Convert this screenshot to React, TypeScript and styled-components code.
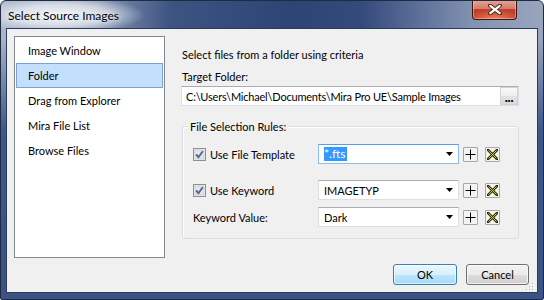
import React from "react";
import styled, { createGlobalStyle } from "styled-components";

const FONT = `"Lato", "Open Sans", "Liberation Sans", sans-serif`;

const Global = createGlobalStyle`
  html, body { margin: 0; padding: 0; background: #ffffff; }
  body { font-family: ${FONT}; font-size: 11px; color: #000; }
  * { box-sizing: border-box; }
`;

const Window = styled.div`
  width: 544px;
  height: 300px;
  border: 1px solid #1e2b42;
  border-radius: 6px 6px 2px 2px;
  overflow: hidden;
  display: flex;
  flex-direction: column;
  background:
    radial-gradient(ellipse 84px 19px at 60px 14px, rgba(255, 255, 255, 0.88) 0%, rgba(255, 255, 255, 0.62) 55%, rgba(255, 255, 255, 0) 100%),
    linear-gradient(180deg, rgba(62, 86, 136, 0) 0px, rgba(62, 86, 136, 0) 36px, rgba(62, 86, 136, 1) 130px, rgba(58, 82, 132, 1) 100%),
    linear-gradient(90deg, #aab6c9 0px, #8596b3 95px, #3d5382 170px, #2e4474 290px, #344a7b 360px, #5d719a 420px, #8291b0 470px, #9aa6bd 544px);
`;

const TitleBar = styled.div`
  height: 27px;
  display: flex;
  align-items: flex-start;
  justify-content: space-between;
  flex-shrink: 0;
`;

const Title = styled.div`
  padding: 7px 0 0 7px;
  line-height: 15px;
  font-size: 12px;
  color: #000;
  text-shadow: 0 0 5px rgba(255, 255, 255, 0.9);
`;

const CloseButton = styled.div`
  width: 45px;
  height: 20px;
  margin-top: -1px;
  margin-right: 26px;
  border: 1px solid #3b1710;
  border-top: none;
  border-radius: 0 0 4px 4px;
  background:
    radial-gradient(ellipse 70% 50% at 50% 100%, rgba(255, 150, 110, 0.8) 0%, rgba(255, 150, 110, 0) 100%),
    linear-gradient(180deg, #e9a595 0%, #d47b6a 45%, #c2402c 50%, #b3321f 100%);
  box-shadow: inset 0 0 0 1px rgba(255, 220, 210, 0.45);
  display: flex;
  align-items: center;
  justify-content: center;
`;

const Client = styled.div`
  flex: 1;
  margin: 0 5px 6px 5px;
  border: 1px solid #2a3b5c;
  background: #f0f0f0;
  padding: 7px 8px 7px 7px;
  display: flex;
  flex-direction: column;
  position: relative;
`;

const MainRow = styled.div`
  display: flex;
  height: 222px;
`;

const ListBox = styled.div`
  width: 151px;
  height: 222px;
  background: #ffffff;
  border: 1px solid #828790;
  padding: 1px;
  display: flex;
  flex-direction: column;
`;

const ListItem = styled.div<{ $selected?: boolean }>`
  height: 25px;
  display: flex;
  align-items: center;
  padding-left: 11px;
  border: 1px solid ${(p) => (p.$selected ? "#7da2ce" : "transparent")};
  background: ${(p) => (p.$selected ? "#c4dffb" : "transparent")};
  white-space: nowrap;
`;

const RightColumn = styled.div`
  margin-left: 16px;
  width: 338px;
  display: flex;
  flex-direction: column;
`;

const Text = styled.div<{ $mt?: number }>`
  margin-top: ${(p) => p.$mt ?? 0}px;
  padding-left: 1px;
  line-height: 15px;
  white-space: nowrap;
`;

const TextBox = styled.div`
  margin-top: 2px;
  height: 20px;
  width: 338px;
  background: #fff;
  border: 1px solid #dbdfe6;
  border-top-color: #abadb3;
  display: flex;
  align-items: center;
  padding-left: 4px;
`;

const TextValue = styled.div`
  flex: 1;
  white-space: nowrap;
  overflow: hidden;
  letter-spacing: -0.2px;
`;

const BrowseButton = styled.div`
  width: 18px;
  height: 18px;
  background: linear-gradient(180deg, #f8f8f8 0%, #eeeeee 50%, #e2e2e2 51%, #dadada 100%);
  border: 1px solid #d2d2d2;
  font-weight: 900;
  font-size: 13px;
  line-height: 19px;
  text-align: center;
  letter-spacing: -0.3px;
  overflow: hidden;
`;

const GroupBox = styled.div`
  position: relative;
  margin-top: 20px;
  margin-left: 1px;
  width: 337px;
  height: 113px;
  border: 1px solid #d5dfe5;
  border-radius: 3px;
  box-shadow: inset 1px 1px 0 #ffffff;
  padding: 17px 0 0 10px;
  display: flex;
  flex-direction: column;
`;

const Legend = styled.div`
  position: absolute;
  top: -8px;
  left: 5px;
  padding: 0 2px;
  background: #f0f0f0;
  line-height: 15px;
`;

const RuleRow = styled.div<{ $mt?: number }>`
  margin-top: ${(p) => p.$mt ?? 0}px;
  height: 20px;
  display: grid;
  grid-template-columns: 125px 141px auto;
  align-items: center;
`;

const RowLabel = styled.div`
  display: flex;
  align-items: center;
  gap: 4px;
  white-space: nowrap;
`;

const Combo = styled.div<{ $focused?: boolean }>`
  height: 20px;
  background: #fff;
  border: 1px solid ${(p) => (p.$focused ? "#8dbce9" : "#dcdfe5")};
  border-top-color: ${(p) => (p.$focused ? "#569de5" : "#abadb3")};
  display: flex;
  align-items: center;
  padding: 0 5px 0 5px;
`;

const ComboText = styled.div`
  flex: 1;
  white-space: nowrap;
`;

const Selected = styled.span`
  background: #3399ff;
  color: #ffffff;
  line-height: 14px;
  display: inline-block;
  padding: 0 2px 0 0;
  font-size: 12px;
`;

const Actions = styled.div`
  display: flex;
  align-items: center;
  gap: 7px;
  padding-left: 4px;
`;

const IconButton = styled.div`
  width: 15px;
  height: 15px;
  border: 1px solid #a7a7a7;
  background: #f3f3f3;
  border-radius: 1px;
  display: flex;
  align-items: center;
  justify-content: center;
`;

const ButtonRow = styled.div`
  margin-top: 6px;
  display: flex;
  justify-content: flex-end;
  gap: 9px;
`;

const PushButton = styled.div<{ $default?: boolean; $w: number }>`
  width: ${(p) => p.$w}px;
  height: 21px;
  border-radius: 3px;
  border: 1px solid ${(p) => (p.$default ? "#3c7fb1" : "#707070")};
  background: ${(p) =>
    p.$default
      ? "linear-gradient(180deg, #eaf6fd 0%, #d9f0fc 50%, #bee6fd 51%, #a7d9f5 100%)"
      : "linear-gradient(180deg, #f2f2f2 0%, #ebebeb 50%, #dddddd 51%, #cfcfcf 100%)"};
  box-shadow: inset 0 0 0 1px ${(p) => (p.$default ? "rgba(255,255,255,0.6)" : "rgba(255,255,255,0.7)")};
  display: flex;
  align-items: center;
  justify-content: center;
  line-height: 15px;
`;

const Grip = styled.div`
  position: absolute;
  right: 2px;
  bottom: 1px;
  width: 10px;
  height: 10px;
`;

const Checkbox = () => (
  <svg width="13" height="13" viewBox="0 0 13 13">
    <rect x="0.5" y="0.5" width="12" height="12" fill="#f4f4f4" stroke="#8e8f8f" />
    <rect x="2" y="2" width="9" height="9" fill="#e4e6ea" stroke="#b7bcc2" strokeWidth="0.6" />
    <path d="M3.2 6.4 L5.4 9.2 L9.8 3.2" fill="none" stroke="#4d6290" strokeWidth="1.8" />
  </svg>
);

const DropArrow = () => (
  <svg width="7" height="4" viewBox="0 0 7 4">
    <polygon points="0,0 7,0 3.5,4" fill="#000" />
  </svg>
);

const PlusIcon = () => (
  <svg width="11" height="11" viewBox="0 0 11 11">
    <path d="M5.5 0.5 V10.5 M0.5 5.5 H10.5" stroke="#000" strokeWidth="1" />
  </svg>
);

const XIcon = () => (
  <svg width="11" height="11" viewBox="0 0 11 11">
    <path d="M1 1 L10 10 M10 1 L1 10" stroke="#2c2c00" strokeWidth="2.6" strokeLinecap="square" />
    <path d="M1.5 1.5 L9.5 9.5 M9.5 1.5 L1.5 9.5" stroke="#e6e600" strokeWidth="0.9" />
  </svg>
);

const CloseX = () => (
  <svg width="14" height="11" viewBox="0 0 14 11">
    <path d="M2 1.5 L12 9.5 M12 1.5 L2 9.5" stroke="#4a2a22" strokeWidth="4" strokeLinecap="round" />
    <path d="M2.3 1.8 L11.7 9.2 M11.7 1.8 L2.3 9.2" stroke="#ffffff" strokeWidth="2.2" strokeLinecap="round" />
  </svg>
);

const GripDots = () => (
  <svg width="10" height="10" viewBox="0 0 10 10">
    {[
      [7, 1],
      [4, 4],
      [7, 4],
      [1, 7],
      [4, 7],
      [7, 7],
    ].map(([x, y], i) => (
      <g key={i}>
        <rect x={x + 1} y={y + 1} width="1" height="1" fill="#ffffff" />
        <rect x={x} y={y} width="1" height="1" fill="#b0b0b0" />
      </g>
    ))}
  </svg>
);

const items = ["Image Window", "Folder", "Drag from Explorer", "Mira File List", "Browse Files"];

const ActionButtons = () => (
  <Actions>
    <IconButton>
      <PlusIcon />
    </IconButton>
    <IconButton>
      <XIcon />
    </IconButton>
  </Actions>
);

export default function App() {
  return (
    <>
      <Global />
      <Window>
        <TitleBar>
          <Title>Select Source Images</Title>
          <CloseButton>
            <CloseX />
          </CloseButton>
        </TitleBar>
        <Client>
          <MainRow>
            <ListBox>
              {items.map((it) => (
                <ListItem key={it} $selected={it === "Folder"}>
                  {it}
                </ListItem>
              ))}
            </ListBox>
            <RightColumn>
              <Text $mt={11}>Select files from a folder using criteria</Text>
              <Text $mt={7}>Target Folder:</Text>
              <TextBox>
                <TextValue>C:\Users\Michael\Documents\Mira Pro UE\Sample Images</TextValue>
                <BrowseButton>...</BrowseButton>
              </TextBox>
              <GroupBox>
                <Legend>File Selection Rules:</Legend>
                <RuleRow>
                  <RowLabel>
                    <Checkbox />
                    Use File Template
                  </RowLabel>
                  <Combo $focused>
                    <ComboText>
                      <Selected>*.fts</Selected>
                    </ComboText>
                    <DropArrow />
                  </Combo>
                  <ActionButtons />
                </RuleRow>
                <RuleRow $mt={16}>
                  <RowLabel>
                    <Checkbox />
                    Use Keyword
                  </RowLabel>
                  <Combo>
                    <ComboText>IMAGETYP</ComboText>
                    <DropArrow />
                  </Combo>
                  <ActionButtons />
                </RuleRow>
                <RuleRow $mt={7}>
                  <RowLabel>Keyword Value:</RowLabel>
                  <Combo>
                    <ComboText>Dark</ComboText>
                    <DropArrow />
                  </Combo>
                  <ActionButtons />
                </RuleRow>
              </GroupBox>
            </RightColumn>
          </MainRow>
          <ButtonRow>
            <PushButton $default $w={64}>
              OK
            </PushButton>
            <PushButton $w={63}>Cancel</PushButton>
          </ButtonRow>
          <Grip>
            <GripDots />
          </Grip>
        </Client>
      </Window>
    </>
  );
}
